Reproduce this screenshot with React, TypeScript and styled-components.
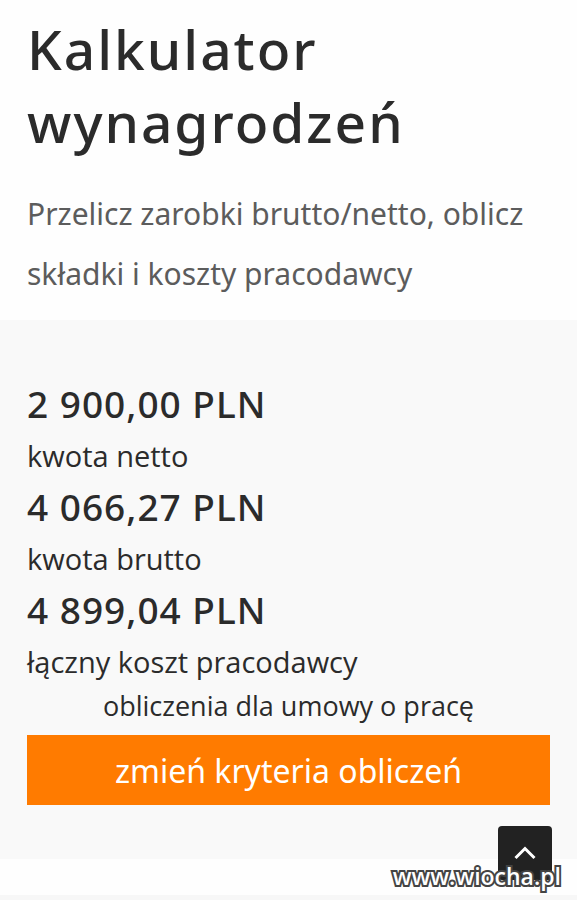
import React from "react";
import styled, { createGlobalStyle } from "styled-components";

const GlobalStyle = createGlobalStyle`
  * { box-sizing: border-box; }
  body { margin: 0; background: #fefefe; color: #2b2b2b; font-family: "Noto Sans", "Open Sans", sans-serif; }
`;
const Page = styled.div`
  position: relative;
  min-height: 100vh;
  overflow: hidden;
`;
const Header = styled.header`
  padding: 12px 27px 16px;
`;
const Title = styled.h1`
  margin: 0 0 26px;
  font-size: 55px;
  line-height: 73px;
  font-weight: 500;
  letter-spacing: 2px;
`;
const Lead = styled.p`
  margin: 0;
  font-size: 30px;
  line-height: 60px;
  color: #5c5c5c;
`;
const Results = styled.section`
  padding: 59px 27px 54px;
  background: #f9f9f9;
`;
const Amounts = styled.dl`
  display: flex;
  flex-direction: column;
  margin: 0;
`;
const Entry = styled.div`
  display: flex;
  flex-direction: column-reverse;
`;
const Label = styled.dt`
  font-family: "Open Sans", sans-serif;
  font-size: 29px;
  line-height: 53px;
`;
const Value = styled.dd`
  margin: 0;
  font-size: 37px;
  line-height: 50px;
  font-weight: 500;
  letter-spacing: 1px;
`;
const Note = styled.p`
  margin: 0 0 12px;
  font-family: "Open Sans", sans-serif;
  font-size: 27px;
  line-height: 35px;
  text-align: center;
`;
const Action = styled.button`
  display: block;
  width: 100%;
  height: 70px;
  padding: 0;
  border: 0;
  background: #ff7b00;
  color: #fff;
  font: 400 32px "Noto Sans", "Open Sans", sans-serif;
`;
const BottomRule = styled.div`
  height: 5px;
  margin-top: 36px;
  background: #f7f7f7;
`;
const TopButton = styled.button`
  position: absolute;
  right: 25px;
  top: 826px;
  display: grid;
  place-items: center;
  width: 54px;
  height: 54px;
  padding: 0;
  border: 0;
  border-radius: 4px;
  background: #222;
`;
const Watermark = styled.a`
  position: absolute;
  right: 16px;
  bottom: 8px;
  color: #fff;
  font: 600 23px/32px "Open Sans", sans-serif;
  text-decoration: none;
  -webkit-text-stroke: 4px #444;
  paint-order: stroke fill;
`;

const amounts = [
  { value: "2 900,00 PLN", label: "kwota netto" },
  { value: "4 066,27 PLN", label: "kwota brutto" },
  { value: "4 899,04 PLN", label: "łączny koszt pracodawcy" },
];

export default function App() {
  return (
    <Page>
      <GlobalStyle />
      <Header>
        <Title>Kalkulator wynagrodzeń</Title>
        <Lead>Przelicz zarobki brutto/netto, oblicz składki i koszty pracodawcy</Lead>
      </Header>
      <Results>
        <Amounts>
          {amounts.map(({ value, label }) => (
            <Entry key={label}>
              <Label>{label}</Label>
              <Value>{value}</Value>
            </Entry>
          ))}
        </Amounts>
        <Note>obliczenia dla umowy o pracę</Note>
        <Action type="button">zmień kryteria obliczeń</Action>
      </Results>
      <BottomRule />
      <TopButton type="button" aria-label="Do góry">
        <svg width="22" height="14" viewBox="0 0 22 14" fill="none" stroke="#fff" strokeWidth="3">
          <path d="M1.5 12 11 2.500l9.500 9.500" />
        </svg>
      </TopButton>
      <Watermark href="#">www.wiocha.pl</Watermark>
    </Page>
  );
}
